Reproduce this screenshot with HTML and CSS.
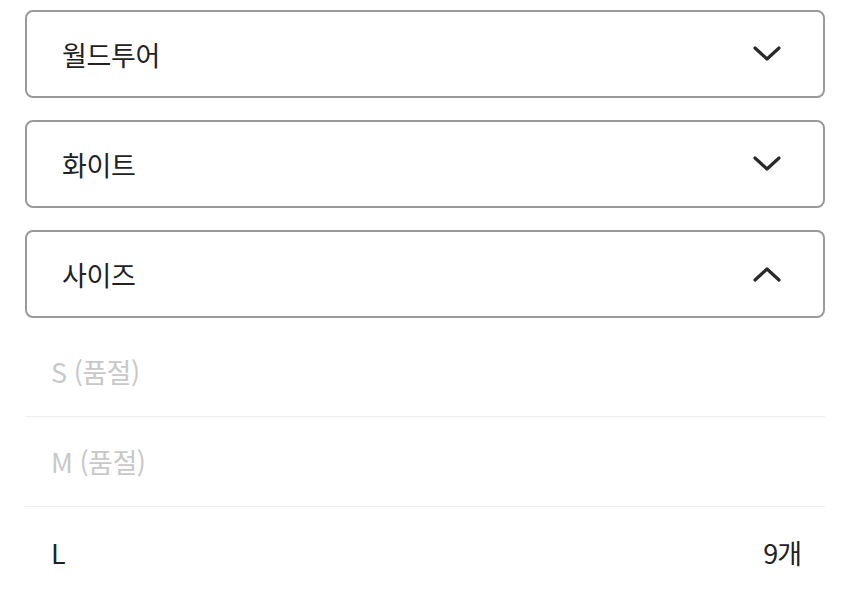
FILE: index.html
```html
<!DOCTYPE html>
<html lang="ko">
<head>
  <meta charset="UTF-8">
  <meta name="viewport" content="width=device-width, initial-scale=1.0">
  <title>옵션 선택</title>
  <link rel="stylesheet" href="styles.css">
</head>
<body>
  <div class="options">
    <div class="select">
      <span class="select-label">월드투어</span>
      <svg class="chevron" viewBox="0 0 28 16" width="28" height="16"><path d="M2 2 L14 13 L26 2"/></svg>
    </div>
    <div class="select">
      <span class="select-label">화이트</span>
      <svg class="chevron" viewBox="0 0 28 16" width="28" height="16"><path d="M2 2 L14 13 L26 2"/></svg>
    </div>
    <div class="select open">
      <span class="select-label">사이즈</span>
      <svg class="chevron" viewBox="0 0 28 16" width="28" height="16"><path d="M2 14 L14 3 L26 14"/></svg>
    </div>
    <ul class="size-list">
      <li class="size soldout"><span>S (품절)</span></li>
      <li class="size soldout"><span>M (품절)</span></li>
      <li class="size"><span>L</span><span class="stock">9개</span></li>
    </ul>
  </div>
</body>
</html>
```

FILE: styles.css
```css
* {
  margin: 0;
  padding: 0;
  box-sizing: border-box;
}

body {
  font-family: "Noto Sans CJK KR", "Noto Sans", sans-serif;
  color: #222;
  background: #fff;
}

.options {
  padding: 10px 25px 0 25px;
  display: flex;
  flex-direction: column;
}

.select {
  height: 88px;
  border: 2px solid #9a9a9a;
  border-radius: 8px;
  display: flex;
  align-items: center;
  justify-content: space-between;
  padding: 0 42px 0 35px;
  margin-bottom: 22px;
}

.select.open {
  margin-bottom: 9px;
}

.select-label {
  font-size: 27px;
  letter-spacing: -0.3px;
}

.chevron path {
  fill: none;
  stroke: #2a2a2a;
  stroke-width: 3.2;
  stroke-linecap: round;
  stroke-linejoin: round;
}

.size-list {
  list-style: none;
}

.size {
  height: 90px;
  border-bottom: 1px solid #eeeeee;
  display: flex;
  align-items: center;
  justify-content: space-between;
  padding: 0 24px 0 26px;
  font-size: 27px;
  letter-spacing: -0.5px;
}

.size:last-child {
  border-bottom: none;
}

.size.soldout {
  color: #c8c8c8;
}

.stock {
  letter-spacing: -1px;
}
```
